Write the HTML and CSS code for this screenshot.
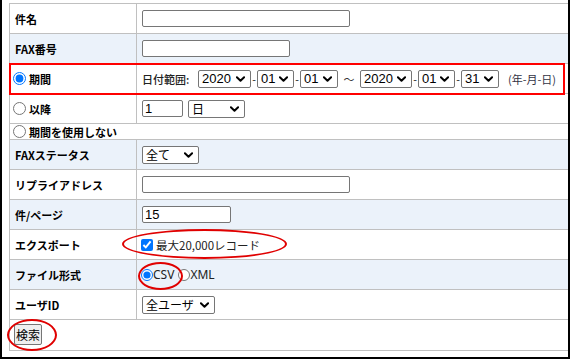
FILE: index.html
```html
<!DOCTYPE html>
<html lang="ja">
<head>
<meta charset="utf-8">
<link rel="stylesheet" href="styles.css">
</head>
<body>
<div class="frame">
  <div class="grid">
    <div class="lab">件名</div>
    <div class="val"><input class="txt w208" type="text"></div>

    <div class="lab alt">FAX番号</div>
    <div class="val alt"><input class="txt w148" type="text"></div>

    <div class="lab rlab"><label class="rl"><input type="radio" name="p" checked>期間</label></div>
    <div class="val">
      <span class="dlabel">日付範囲:</span>
      <span class="sel w53"><select><option>2020</option></select><svg class="chev" viewBox="0 0 10 6"><path d="M1 1 L5 5 L9 1"/></svg></span>
      <span class="sep">-</span>
      <span class="sel w37"><select><option>01</option></select><svg class="chev" viewBox="0 0 10 6"><path d="M1 1 L5 5 L9 1"/></svg></span>
      <span class="sep">-</span>
      <span class="sel w38"><select><option>01</option></select><svg class="chev" viewBox="0 0 10 6"><path d="M1 1 L5 5 L9 1"/></svg></span>
      <span class="tilde">～</span>
      <span class="sel w52"><select><option>2020</option></select><svg class="chev" viewBox="0 0 10 6"><path d="M1 1 L5 5 L9 1"/></svg></span>
      <span class="sep">-</span>
      <span class="sel w37"><select><option>01</option></select><svg class="chev" viewBox="0 0 10 6"><path d="M1 1 L5 5 L9 1"/></svg></span>
      <span class="sep">-</span>
      <span class="sel w38"><select><option>31</option></select><svg class="chev" viewBox="0 0 10 6"><path d="M1 1 L5 5 L9 1"/></svg></span>
      <span class="fmt">(年-月-日)</span>
    </div>

    <div class="lab rlab"><label class="rl"><input type="radio" name="p">以降</label></div>
    <div class="val">
      <input class="txt w41" type="text" value="1">
      <span class="sel w57 ml5 jp"><select><option>日</option></select><svg class="chev" viewBox="0 0 10 6"><path d="M1 1 L5 5 L9 1"/></svg></span>
    </div>

    <div class="full rlab"><label class="rl"><input type="radio" name="p">期間を使用しない</label></div>

    <div class="lab alt">FAXステータス</div>
    <div class="val alt">
      <span class="sel w57 jp"><select><option>全て</option></select><svg class="chev" viewBox="0 0 10 6"><path d="M1 1 L5 5 L9 1"/></svg></span>
    </div>

    <div class="lab">リプライアドレス</div>
    <div class="val"><input class="txt w208" type="text"></div>

    <div class="lab alt">件/ページ</div>
    <div class="val alt"><input class="txt w89" type="text" value="15"></div>

    <div class="lab">エクスポート</div>
    <div class="val"><label class="cl"><input type="checkbox" checked>最大20,000レコード</label></div>

    <div class="lab alt">ファイル形式</div>
    <div class="val alt">
      <label class="fl"><input type="radio" name="f" checked>CSV</label>
      <label class="fl fl2"><input type="radio" name="f">XML</label>
    </div>

    <div class="lab">ユーザID</div>
    <div class="val">
      <span class="sel w73 jp"><select><option>全ユーザ</option></select><svg class="chev" viewBox="0 0 10 6"><path d="M1 1 L5 5 L9 1"/></svg></span>
    </div>

    <div class="full btnrow"><button class="btn" type="button">検索</button></div>
  </div>

  <div class="mark rect"></div>
  <div class="mark ell e-export"></div>
  <div class="mark ell e-csv"></div>
  <div class="mark ell e-btn"></div>
</div>
</body>
</html>
```
FILE: styles.css
```css
html, body {
  margin: 0;
  padding: 0;
  background: #fff;
}

.frame {
  position: relative;
  width: 570px;
  height: 359px;
  box-sizing: border-box;
  border: 2px solid #000;
  border-top: 0;
  padding: 3px 0 0 7px;
  background: #fff;
  font-family: "Noto Sans CJK JP", "Noto Sans", sans-serif;
  font-size: 11px;
  color: #000;
}

.grid {
  display: grid;
  grid-template-columns: 126px 1fr;
  grid-template-rows: 29px 29px 29px 29px 15px 29px 29px 29px 29px 29px 29px 30px;
  gap: 1px;
  background: #c0c0c0;
  border-left: 1px solid #c0c0c0;
  border-top: 1px solid #c0c0c0;
  border-bottom: 1px solid #c0c0c0;
}

.lab, .val, .full {
  background: #fff;
  display: flex;
  align-items: center;
}

.lab {
  padding-left: 5px;
  font-weight: bold;
  color: #000;
}

.val {
  padding-left: 5px;
}

.alt {
  background: #ebf2fa;
}

.full {
  grid-column: 1 / -1;
}

.rlab {
  padding-left: 3px;
  font-weight: bold;
  color: #000;
}

.rl {
  display: flex;
  align-items: center;
}

.rl input {
  width: 13px;
  height: 13px;
  margin: 0 3px 0 0;
}

.txt {
  box-sizing: border-box;
  height: 17px;
  border: 1px solid #767676;
  border-radius: 2px;
  padding: 0 2px;
  font-family: "Liberation Sans", Arial, sans-serif;
  font-size: 13px;
  color: #000;
  background: #fff;
  margin: 0;
}

.w208 { width: 208px; }
.w148 { width: 148px; }
.w41 { width: 41px; }
.w89 { width: 89px; }

.dlabel {
  width: 56px;
  color: #222;
  font-weight: 500;
}

.sel {
  position: relative;
  display: inline-flex;
  height: 18px;
}

.sel select {
  appearance: none;
  -webkit-appearance: none;
  box-sizing: border-box;
  width: 100%;
  height: 18px;
  margin: 0;
  border: 1px solid #767676;
  border-radius: 2px;
  background: #fff;
  padding: 0 0 0 3px;
  font-family: "Liberation Sans", Arial, "Noto Sans CJK JP", sans-serif;
  font-size: 13px;
  color: #000;
  line-height: 16px;
}

.sel.jp select {
  font-family: "Noto Sans CJK JP", sans-serif;
  font-size: 12px;
}

.chev {
  position: absolute;
  right: 6px;
  top: 6px;
  width: 9px;
  height: 6px;
  pointer-events: none;
}

.chev path {
  fill: none;
  stroke: #000;
  stroke-width: 2.2;
  stroke-linecap: round;
  stroke-linejoin: round;
}

.w53 { width: 53px; }
.w52 { width: 52px; }
.w37 { width: 37px; }
.w38 { width: 38px; }
.w57 { width: 57px; }
.w73 { width: 73px; }
.ml5 { margin-left: 5px; }

.sep {
  width: 6px;
  text-align: center;
  font-family: "Liberation Sans", Arial, sans-serif;
  font-size: 11px;
  color: #333;
}

.tilde {
  width: 22px;
  text-align: center;
  color: #333;
  font-size: 11px;
}

.fmt {
  margin-left: 9px;
  color: #334;
  font-size: 11px;
}

.cl {
  display: flex;
  align-items: center;
  color: #222;
  font-size: 11.5px;
}

.cl input {
  width: 12px;
  height: 12px;
  margin: 0 3px 0 -1px;
}

.fl {
  display: flex;
  align-items: center;
  font-family: "Noto Sans", sans-serif;
  font-size: 12px;
  color: #222;
}

.fl input {
  width: 12px;
  height: 12px;
  margin: 0 0 0 -1px;
}

.fl2 input {
  margin-left: 4px;
}

.btnrow {
  align-items: flex-start;
  padding-top: 4px;
}

.btn {
  box-sizing: border-box;
  width: 28px;
  height: 21px;
  margin: 0 0 0 4px;
  padding: 0;
  border: 1px solid #767676;
  border-radius: 2px;
  background: #efefef;
  font-family: "Noto Sans CJK JP", sans-serif;
  font-size: 12px;
  color: #000;
}

.mark {
  position: absolute;
  box-sizing: border-box;
  pointer-events: none;
}

.rect {
  left: 7px;
  top: 63px;
  width: 556px;
  height: 32px;
  border: 2px solid #f00;
}

.ell {
  border: 2px solid #e00000;
  border-radius: 50%;
}

.e-export {
  left: 120px;
  top: 229px;
  width: 165px;
  height: 30px;
}

.e-csv {
  left: 136px;
  top: 262px;
  width: 45px;
  height: 28px;
}

.e-btn {
  left: 5px;
  top: 319px;
  width: 50px;
  height: 32px;
}
```
